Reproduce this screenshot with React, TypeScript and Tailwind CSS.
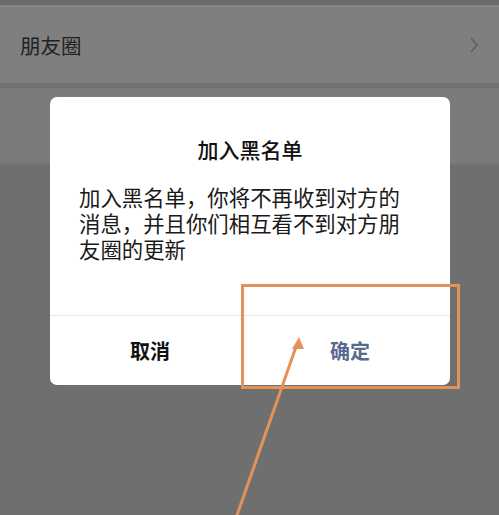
import React from "react";

const font = { fontFamily: '"Noto Sans CJK SC", "Noto Sans", sans-serif' };

const Dialog: React.FC = () => {
  return (
    <div className="absolute left-[50px] top-[97px] w-[400px] h-[288px] rounded-[7px] bg-white flex flex-col">
      <div className="pt-[38px] text-center text-[21px] leading-[28px] font-medium text-[#111]">
        加入黑名单
      </div>
      <div className="mt-[21px] pl-[29px] w-[360px] text-[21.4px] leading-[26px] text-[#1a1a1a]">
        加入黑名单，你将不再收到对方的消息，并且你们相互看不到对方朋友圈的更新
      </div>
      <div className="mt-auto flex h-[70px] border-t border-[#e6e6e6]">
        <button className="flex-1 text-[20px] font-bold text-[#111]">取消</button>
        <button className="flex-1 text-[20px] font-bold text-[#586a8f]">确定</button>
      </div>
    </div>
  );
};

export default function App() {
  return (
    <div className="relative w-[499px] h-[515px] overflow-hidden bg-[#6f6f6f]" style={font}>
      <div className="h-[5px] bg-[#6b6b6b]" />
      <div className="h-[2px] bg-[#858585]" />
      <div className="h-[76px] bg-[#7f7f7f] flex items-center justify-between pl-[20px] pr-[20px]">
        <span className="text-[20.5px] text-[#222]">朋友圈</span>
        <svg width="10" height="18" viewBox="0 0 10 18" fill="none">
          <path d="M2 2l6 7-6 7" stroke="#5e5e5e" strokeWidth="1.5" />
        </svg>
      </div>
      <div className="h-[5px] bg-[#727272]" />
      <div className="h-[75px] bg-[#7b7b7b]" />
      <div className="h-[2px] bg-[#747474]" />

      <Dialog />

      <div className="absolute left-[241px] top-[284px] w-[219px] h-[105px] border-[3px] border-[#e3935a]" />
      <svg className="absolute left-0 top-0" width="499" height="515" viewBox="0 0 499 515">
        <line x1="236" y1="518" x2="297" y2="344" stroke="#e3935a" strokeWidth="3" />
        <path d="M299 337l-7 12h12z" fill="#e3935a" />
      </svg>
    </div>
  );
}
